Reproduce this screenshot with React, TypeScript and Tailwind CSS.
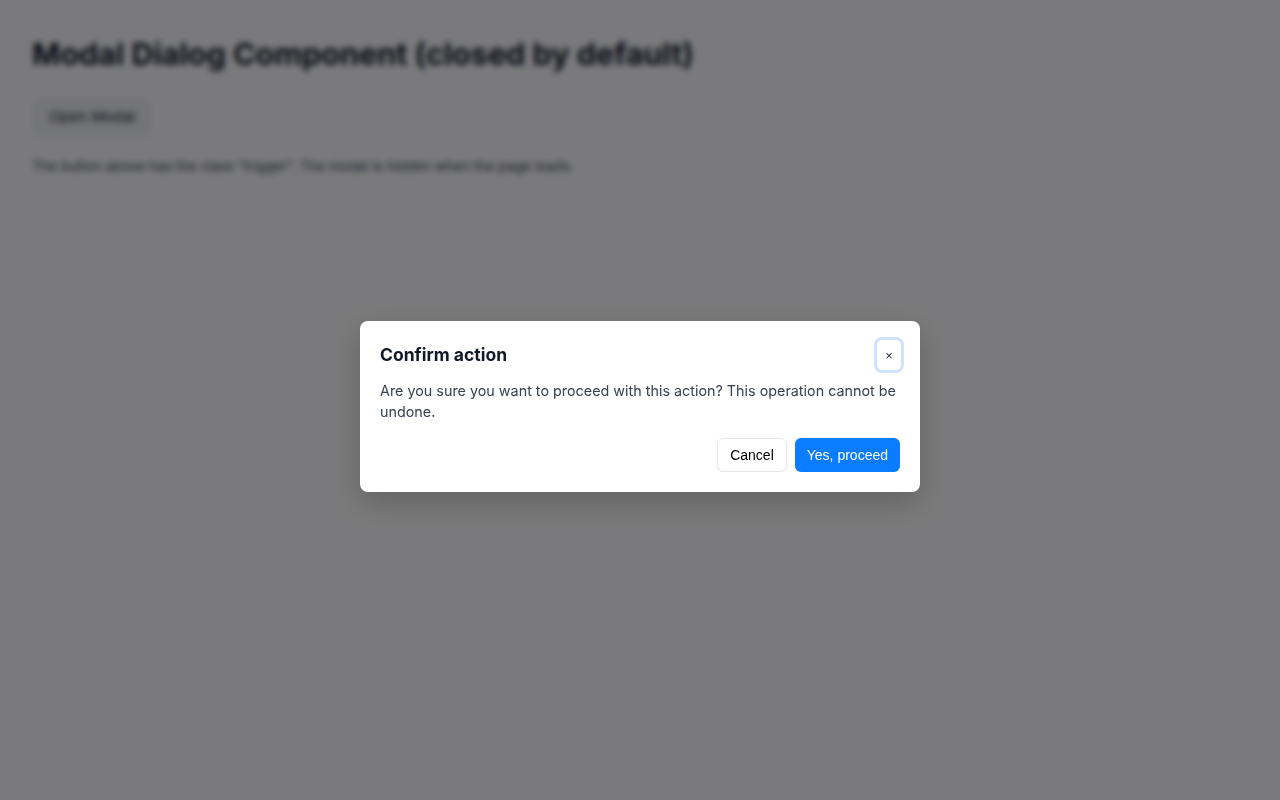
export default function App() {
  return (
    <div className="relative min-h-[800px] bg-white font-['Inter',sans-serif]">
      <main className="p-8">
        <h1 className="text-[30.5px] leading-[44px] font-bold text-[#111827]">Modal Dialog Component (closed by default)</h1>
        <button className="mt-[23px] ml-[2px] rounded-md border border-[#e5e7eb] bg-[#f3f4f6] px-[14px] py-[6px] text-[15px] text-[#1f2937]">
          Open Modal
        </button>
        <p className="mt-[20px] text-[13.7px] text-[#374151]">
          The button above has the class "trigger". The modal is hidden when the page loads.
        </p>
      </main>

      <div className="fixed inset-0 flex items-center justify-center bg-[rgba(0,0,4,0.52)] pt-[13px] backdrop-blur-[3px]">
        <div className="w-[560px] rounded-lg bg-white px-5 pt-4 pb-5 shadow-[0_10px_30px_rgba(0,0,0,0.2)]">
          <div className="flex items-center justify-between">
            <h2 className="text-[17.5px] font-bold text-[#111827]">Confirm action</h2>
            <button className="mr-[-4px] flex h-[36px] w-[30px] items-center justify-center rounded-lg border-[3px] border-[#cfe3ff] bg-white font-['Liberation_Sans',Arial,sans-serif] text-[13px] leading-none text-[#1f2937]">
              ×
            </button>
          </div>
          <p className="mt-[7px] text-[14.35px] leading-[21px] text-[#374151]">
            Are you sure you want to proceed with this action? This operation cannot be undone.
          </p>
          <div className="mt-[16px] flex justify-end gap-2 font-['Liberation_Sans',Arial,sans-serif] text-[14px]">
            <button className="h-[34px] rounded-md border border-[#e5e7eb] bg-white px-3 text-black">Cancel</button>
            <button className="h-[34px] rounded-md bg-[#0a7cff] px-3 text-white">Yes, proceed</button>
          </div>
        </div>
      </div>
    </div>
  );
}
